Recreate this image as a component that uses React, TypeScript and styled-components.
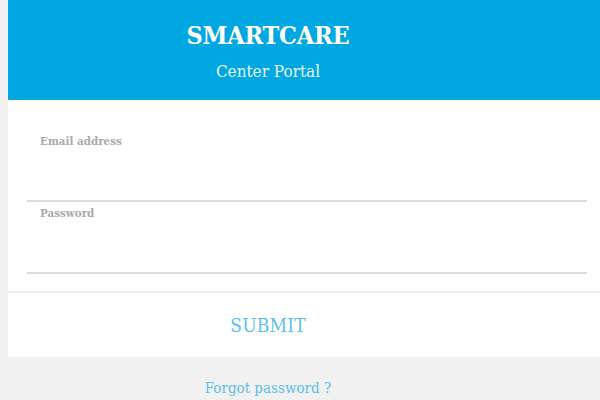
import styled, { createGlobalStyle } from "styled-components";

const GlobalStyle = createGlobalStyle`
  html, body {
    margin: 0;
    padding: 0;
    background: #f1f1f1;
    overflow: hidden;
  }
  body {
    padding-left: 8px;
    font-family: "DejaVu Serif Condensed", "DejaVu Serif", serif;
  }
`;

const Card = styled.div`
  width: 600px;
  background: #fff;
`;

const Header = styled.header`
  height: 100px;
  box-sizing: border-box;
  padding: 21px 80px 0 0;
  background: #00a7e1;
  border-bottom: 1px solid #1aa1d6;
  display: flex;
  flex-direction: column;
  align-items: center;
  color: #fff;
`;

const Brand = styled.h1`
  margin: 0;
  font-size: 25px;
  line-height: 30px;
  font-weight: 700;
  letter-spacing: -0.2px;
`;

const Subtitle = styled.div`
  margin-top: 9px;
  font-size: 17px;
  line-height: 22px;
  color: #e6f4fa;
`;

const Form = styled.form`
  padding: 30px 21px 17px 19px;
`;

const Field = styled.label`
  display: block;
  padding-top: 4px;
  border-bottom: 2px solid #dcdcdc;
`;

const Label = styled.span`
  display: block;
  padding-left: 13px;
  font-size: 11.5px;
  line-height: 14px;
  font-weight: 700;
  color: #a9a9a9;
`;

const Input = styled.input`
  display: block;
  width: 100%;
  height: 52px;
  box-sizing: border-box;
  border: 0;
  outline: none;
  background: transparent;
  padding: 0 13px;
  font: inherit;
  font-size: 15px;
`;

const Submit = styled.button`
  display: block;
  width: 100%;
  height: 66px;
  box-sizing: border-box;
  padding: 0 80px 0 0;
  border: 0;
  border-top: 2px solid #eeeeee;
  background: #fff;
  font-family: inherit;
  font-size: 19px;
  letter-spacing: 0.2px;
  color: #5bc0eb;
  cursor: pointer;
`;

const Footer = styled.div`
  width: 520px;
  padding-top: 21px;
  text-align: center;
`;

const Forgot = styled.a`
  font-size: 15px;
  color: #5bbfea;
  text-decoration: none;
`;

export default function App() {
  return (
    <>
      <GlobalStyle />
      <Card>
        <Header>
          <Brand>SMARTCARE</Brand>
          <Subtitle>Center Portal</Subtitle>
        </Header>
        <Form onSubmit={(e) => e.preventDefault()}>
          <Field>
            <Label>Email address</Label>
            <Input type="email" />
          </Field>
          <Field>
            <Label>Password</Label>
            <Input type="password" />
          </Field>
        </Form>
        <Submit type="button">SUBMIT</Submit>
      </Card>
      <Footer>
        <Forgot href="#">Forgot password ?</Forgot>
      </Footer>
    </>
  );
}
